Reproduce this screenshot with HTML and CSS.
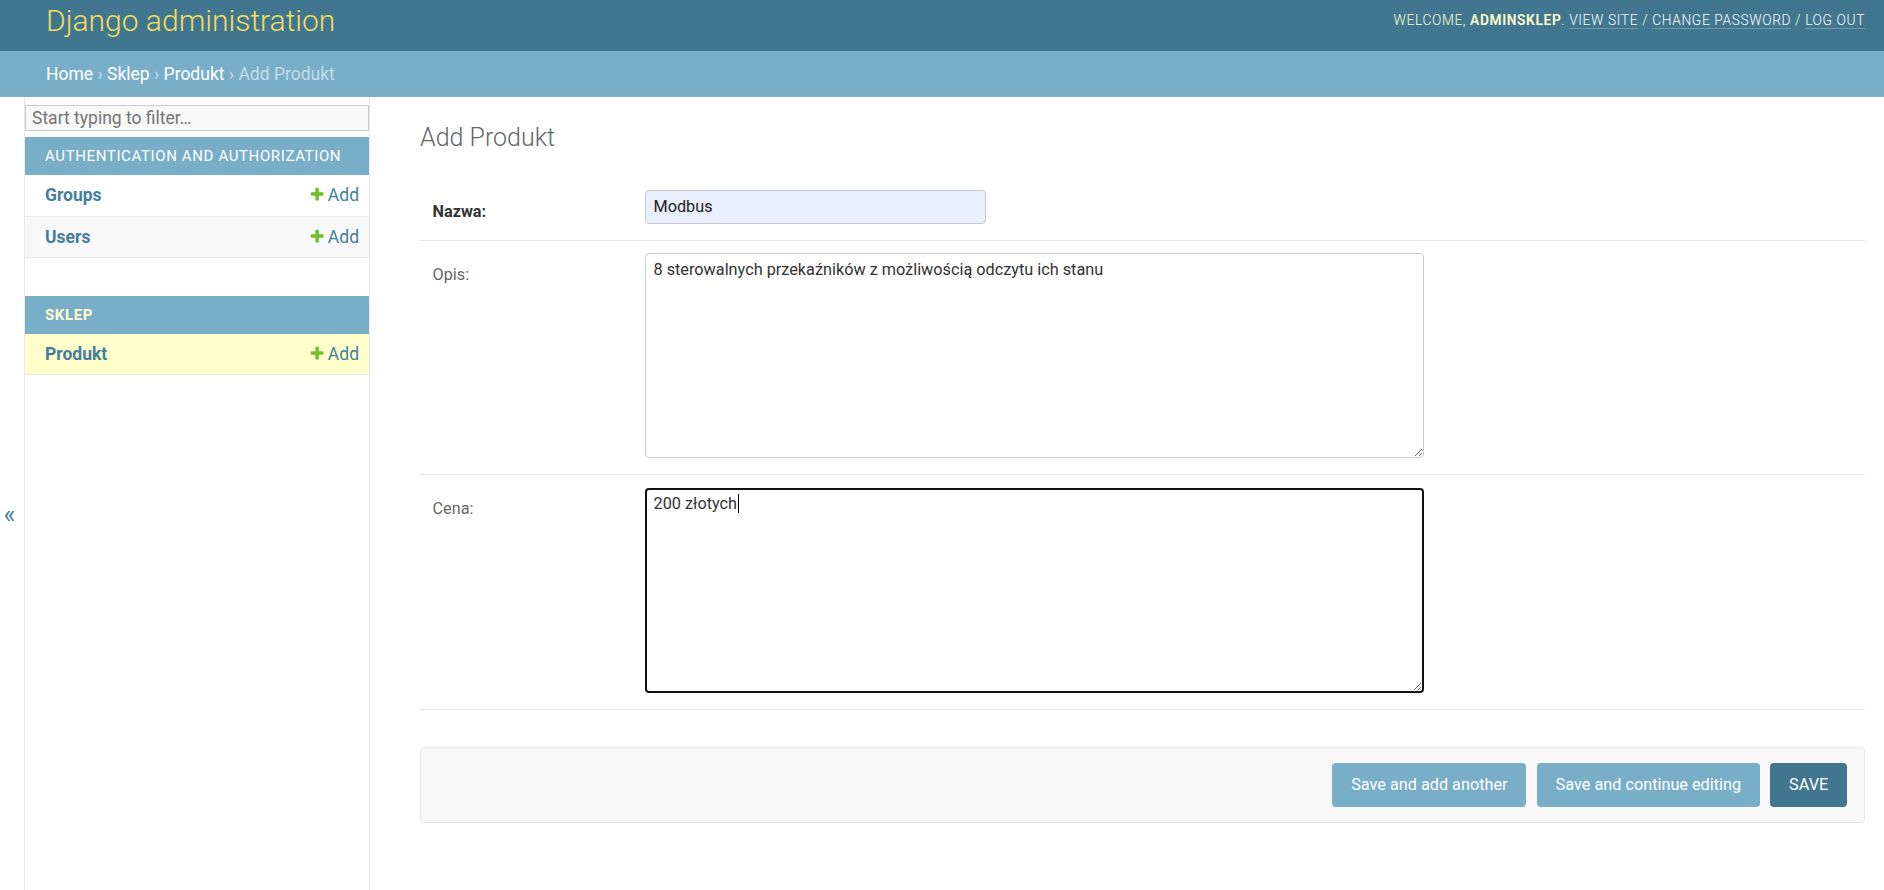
FILE: index.html
```html
<!DOCTYPE html>
<html lang="en">
<head>
<meta charset="utf-8">
<title>Add Produkt | Django site admin</title>
<link rel="stylesheet" href="styles.css">
</head>
<body>
<div class="container">
  <header class="header">
    <div class="branding"><h1 class="site-name">Django administration</h1></div>
    <div class="user-tools">Welcome, <strong>adminsklep</strong>. <a href="#">View site</a> / <a href="#">Change password</a> / <a href="#">Log out</a></div>
  </header>
  <nav class="breadcrumbs"><a href="#">Home</a> › <a href="#">Sklep</a> › <a href="#">Produkt</a> › Add Produkt</nav>
  <div class="main">
    <button class="toggle-nav" type="button">«</button>
    <aside class="nav-sidebar">
      <input class="nav-filter" type="search" placeholder="Start typing to filter…">
      <table class="app-module">
        <caption>Authentication and Authorization</caption>
        <tr class="row1"><th>Groups</th><td><a class="addlink" href="#"><svg class="plus" viewBox="0 0 1792 1792"><path fill="#70bf2b" d="M1600 796v192q0 40-28 68t-68 28h-416v416q0 40-28 68t-68 28h-192q-40 0-68-28t-28-68v-416h-416q-40 0-68-28t-28-68v-192q0-40 28-68t68-28h416v-416q0-40 28-68t68-28h192q40 0 68 28t28 68v416h416q40 0 68 28t28 68z"/></svg>Add</a></td></tr>
        <tr class="row2"><th>Users</th><td><a class="addlink" href="#"><svg class="plus" viewBox="0 0 1792 1792"><path fill="#70bf2b" d="M1600 796v192q0 40-28 68t-68 28h-416v416q0 40-28 68t-68 28h-192q-40 0-68-28t-28-68v-416h-416q-40 0-68-28t-28-68v-192q0-40 28-68t68-28h416v-416q0-40 28-68t68-28h192q40 0 68 28t28 68v416h416q40 0 68 28t28 68z"/></svg>Add</a></td></tr>
      </table>
      <table class="app-module current-app">
        <caption>Sklep</caption>
        <tr class="current-model"><th>Produkt</th><td><a class="addlink" href="#"><svg class="plus" viewBox="0 0 1792 1792"><path fill="#70bf2b" d="M1600 796v192q0 40-28 68t-68 28h-416v416q0 40-28 68t-68 28h-192q-40 0-68-28t-28-68v-416h-416q-40 0-68-28t-28-68v-192q0-40 28-68t68-28h416v-416q0-40 28-68t68-28h192q40 0 68 28t28 68v416h416q40 0 68 28t28 68z"/></svg>Add</a></td></tr>
      </table>
    </aside>
    <div class="content">
      <h1 class="page-title">Add Produkt</h1>
      <form class="change-form">
        <fieldset class="fieldset">
          <div class="form-row">
            <label class="field-label required">Nazwa:</label>
            <input class="text-field" type="text" value="Modbus">
          </div>
          <div class="form-row">
            <label class="field-label">Opis:</label>
            <textarea class="large-text">8 sterowalnych przekaźników z możliwością odczytu ich stanu</textarea>
          </div>
          <div class="form-row">
            <label class="field-label">Cena:</label>
            <div class="focus-wrap">
              <textarea class="large-text focused">200 złotych</textarea>
              <span class="caret"></span>
            </div>
          </div>
        </fieldset>
        <div class="submit-row">
          <button type="button" class="btn">Save and add another</button>
          <button type="button" class="btn">Save and continue editing</button>
          <button type="button" class="btn btn-default">SAVE</button>
        </div>
      </form>
    </div>
  </div>
</div>
</body>
</html>
```

FILE: styles.css
```css
* { box-sizing: border-box; }

html, body {
  margin: 0;
  padding: 0;
  background: #fff;
}

body {
  font-family: Roboto, "Liberation Sans", Arial, sans-serif;
  color: #333;
  font-size: 17.5px;
}

a { text-decoration: none; }

.container {
  min-height: 100vh;
  display: flex;
  flex-direction: column;
}

/* Header */
.header {
  height: 51px;
  background: #417690;
  display: flex;
  justify-content: space-between;
  align-items: flex-start;
  padding: 0 19px 0 46px;
}

.site-name {
  margin: 0;
  padding-top: 3px;
  font-size: 30px;
  font-weight: 300;
  line-height: normal;
  color: #f5dd5d;
}

.user-tools {
  padding-top: 11.5px;
  font-size: 13.75px;
  font-weight: 300;
  letter-spacing: 0.625px;
  text-transform: uppercase;
  line-height: normal;
  color: #ffc;
  white-space: nowrap;
}

.user-tools strong { font-weight: 600; }

.user-tools a {
  color: #fff;
  border-bottom: 1px solid rgba(255, 255, 255, 0.25);
}

/* Breadcrumbs */
.breadcrumbs {
  height: 46px;
  background: #79aec8;
  padding: 13px 46px 12px;
  line-height: 21px;
  font-size: 17.5px;
  color: #c4dce8;
}

.breadcrumbs a { color: #fff; }

/* Main */
.main {
  flex: 1;
  display: flex;
  align-items: stretch;
}

.toggle-nav {
  flex: 0 0 25px;
  width: 25px;
  border: 0;
  border-right: 1px solid #e8e8e8;
  background: #fff;
  padding: 403px 0 0 3.5px;
  margin: 0;
  display: flex;
  justify-content: flex-start;
  align-items: flex-start;
  font-family: Roboto, sans-serif;
  font-size: 25px;
  line-height: normal;
  color: #447e9b;
}

.nav-sidebar {
  flex: 0 0 345px;
  width: 345px;
  border-top: 1px solid transparent;
  border-right: 1px solid #e8e8e8;
}

.nav-filter {
  display: block;
  width: 100%;
  height: 26px;
  margin: 7px 0 6px;
  padding: 0 6px;
  border: 1px solid #ccc;
  background: #f8f8f8;
  font-family: Roboto, sans-serif;
  font-size: 17.5px;
  color: #333;
  border-radius: 0;
  -webkit-appearance: none;
  appearance: none;
}

.nav-filter::placeholder { color: #757575; }

.app-module {
  width: 100%;
  border-collapse: collapse;
  margin-bottom: 38px;
}

.app-module caption {
  height: 38px;
  background: #79aec8;
  color: #fff;
  text-align: left;
  text-transform: uppercase;
  font-size: 15px;
  letter-spacing: 0.625px;
  line-height: 18px;
  padding: 10px 10px 10px 20px;
  font-weight: 400;
}

.current-app caption {
  color: #ffc;
  font-weight: 700;
}

.app-module th,
.app-module td {
  height: 41px;
  padding: 10px;
  line-height: 20px;
  border-bottom: 1px solid #e8e8e8;
  font-size: 17.5px;
  vertical-align: top;
}

.app-module th {
  text-align: left;
  padding-left: 20px;
  font-weight: 700;
  color: #447e9b;
}

.app-module td {
  text-align: right;
  white-space: nowrap;
}

.row1 { background: #fff; }
.row2 { background: #f8f8f8; }
.current-model { background: #ffc; }

.addlink {
  color: #447e9b;
  white-space: nowrap;
}

.plus {
  width: 16.25px;
  height: 16.25px;
  margin-right: 2.5px;
  vertical-align: -1.5px;
}

/* Content */
.content {
  flex: 1;
  padding: 26px 19px 40px 50px;
}

.page-title {
  margin: 0 0 25px;
  font-size: 25px;
  font-weight: 300;
  line-height: normal;
  color: #666;
}

.change-form { margin: 0; }

.fieldset {
  margin: 0;
  padding: 0;
  border: 0;
  min-width: 0;
}

.form-row {
  display: flex;
  align-items: flex-start;
  padding: 12.5px 12.5px 16px;
  border-bottom: 1px solid #e8e8e8;
  font-size: 16.25px;
}

.field-label {
  flex: 0 0 212.5px;
  padding: 11.5px 12.5px 0 0;
  line-height: 20px;
  font-size: 16.25px;
  color: #666;
}

.field-label.required {
  padding-top: 12px;
  font-weight: 700;
  color: #333;
}

.text-field {
  width: 341px;
  height: 34px;
  padding: 0 7.5px;
  border: 1px solid #ccc;
  border-radius: 4px;
  background: #e8f0fe;
  font-family: Roboto, sans-serif;
  font-size: 16.25px;
  color: #222;
  margin: 0;
}

.large-text {
  display: block;
  width: 779px;
  height: 205px;
  padding: 5.5px 7.5px;
  border: 1px solid #ccc;
  border-radius: 4px;
  background: #fff;
  font-family: Roboto, sans-serif;
  font-size: 16.25px;
  line-height: normal;
  color: #333;
  margin: 0;
  resize: both;
}

.focus-wrap {
  position: relative;
}

.large-text.focused {
  border: 2px solid #101010;
  padding: 4.5px 6.5px;
}

.caret {
  position: absolute;
  left: 93px;
  top: 6px;
  width: 1px;
  height: 19px;
  background: #000;
}

/* Submit row */
.submit-row {
  margin-top: 37px;
  display: flex;
  justify-content: flex-end;
  gap: 10.5px;
  padding: 15px 17px;
  background: #f8f8f8;
  border: 1px solid #e8e8e8;
  border-radius: 4px;
}

.btn {
  height: 44px;
  padding: 0 18.75px;
  border: 0;
  border-radius: 4px;
  background: #79aec8;
  color: #fff;
  font-family: Roboto, sans-serif;
  font-size: 16.25px;
  font-weight: 400;
  line-height: 18px;
  margin: 0;
}

.btn-default { background: #417690; }
```
